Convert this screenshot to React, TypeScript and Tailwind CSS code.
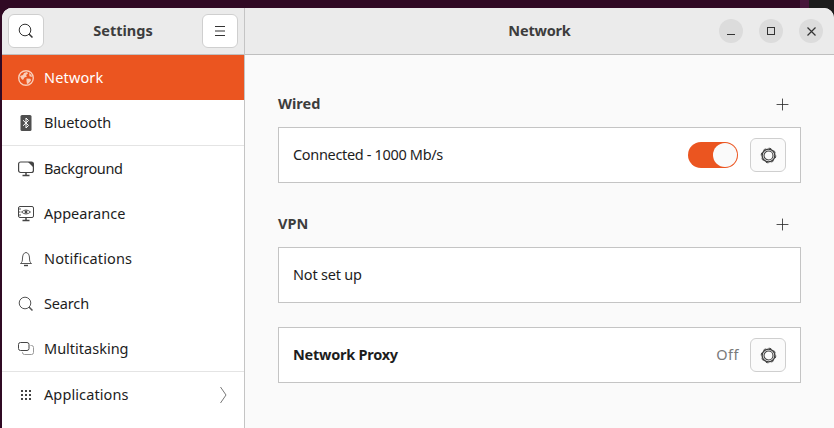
import { Plus } from "lucide-react";

function Gear() {
  return (
    <svg width="17" height="17" viewBox="0 0 17 17" fill="none" stroke="#3f3f3f">
      <circle cx="8.5" cy="8.5" r="4.5" strokeWidth="1.1" />
      <circle cx="8.5" cy="8.5" r="6.4" strokeWidth="1.4" />
      <circle cx="8.5" cy="8.5" r="7.3" strokeWidth="0.9" strokeDasharray="2.6 3.13" />
    </svg>
  );
}

function GlobeIcon() {
  return (
    <svg width="16" height="16" viewBox="0 0 16 16">
      <circle cx="8" cy="8" r="7.3" fill="#eb5520" stroke="#f9cdb8" strokeWidth="1.4" />
      <path d="M2 6l3-1 1-2 3-1 1 1.5-2 1.5 1 1.5-2.5 1L5 10l-1.5-1zM8.5 8.5l4 .3.5 1.7-2.5 3-1.5.5-.5-3zM11 3l2.5 2 .5 2-2.5-.8z" fill="#f9cdb8" />
    </svg>
  );
}

function BluetoothIcon() {
  return (
    <svg width="16" height="16" viewBox="0 0 16 16">
      <rect x="2.5" y="0" width="11" height="16" rx="1.5" fill="#4f4f4f" />
      <path d="M5 5.2 10.5 10.5 8 13V3l2.5 2.5L5 10.8" fill="none" stroke="#fff" strokeWidth="1" />
    </svg>
  );
}

function BackgroundIcon() {
  return (
    <svg width="16" height="16" viewBox="0 0 16 16" fill="none">
      <rect x="0.6" y="1" width="14.8" height="10.5" rx="2" stroke="#444" strokeWidth="1.2" />
      <path d="M10 1h3.5a2 2 0 0 1 2 2v3.5z" fill="#444" />
      <path d="M4.5 14.5h7M8 11.5v3" stroke="#444" strokeWidth="1.5" />
    </svg>
  );
}

function AppearanceIcon() {
  return (
    <svg width="16" height="16" viewBox="0 0 16 16" fill="none" stroke="#444">
      <rect x="0.5" y="0.5" width="15" height="11" rx="1.5" />
      <path d="M3.5 6q4.5-4 9 0q-4.5 4-9 0z" strokeWidth="0.9" />
      <circle cx="8" cy="6" r="1.4" fill="#444" stroke="none" />
      <path d="M1 3h2M1 6h1.5M1 9h2" strokeWidth="0.9" />
      <path d="M4.5 14.5h7M8 11.5v3" strokeWidth="1.5" />
    </svg>
  );
}

function BellIcon() {
  return (
    <svg width="16" height="16" viewBox="0 0 16 16" fill="none" stroke="#444">
      <path d="M2.5 12.5c1.5-1 2-2.5 2-5.5 0-3 1.5-5.5 3.5-5.5s3.5 2.5 3.5 5.5c0 3 .5 4.5 2 5.5z" strokeWidth="0.9" />
      <path d="M6 14.5h4" strokeWidth="1.4" />
    </svg>
  );
}

function SearchIcon({ color = "#555" }: { color?: string }) {
  return (
    <svg width="16" height="16" viewBox="0 0 16 16" fill="none" stroke={color}>
      <circle cx="7" cy="7" r="5.8" strokeWidth="1" />
      <path d="M11 11l3.5 3.5" strokeWidth="1.5" />
    </svg>
  );
}

function MultitaskIcon() {
  return (
    <svg width="16" height="16" viewBox="0 0 16 16" fill="none" stroke="#444">
      <rect x="0.5" y="1.5" width="10.5" height="8" rx="2" />
      <path d="M12.5 4.5h1a2 2 0 0 1 2 2v5a2 2 0 0 1-2 2h-7a2 2 0 0 1-2-2v-.5" stroke="#999" />
    </svg>
  );
}

function AppsIcon() {
  const dots = [3, 7, 11];
  return (
    <svg width="16" height="16" viewBox="0 0 16 16" fill="#444">
      {dots.map((y) => dots.map((x) => <rect key={`${x}-${y}`} x={x} y={y} width="2" height="2" />))}
    </svg>
  );
}

function NavRow({ icon, label, active, chevron, tracking }: { icon: React.ReactNode; label: string; active?: boolean; chevron?: boolean; tracking?: string }) {
  return (
    <div className={`h-[45px] flex items-center pl-4 pr-4 text-[14.5px] ${active ? "bg-[#eb5520] text-white" : "text-[#1d1d1d]"}`}>
      <div className="w-4 h-4 mr-[10px] flex items-center justify-center shrink-0">{icon}</div>
      <span className={`flex-1 ${tracking ?? ""}`}>{label}</span>
      {chevron && (
        <svg width="7" height="18" viewBox="0 0 7 18" fill="none" stroke="#777" strokeWidth="1" className="mr-px">
          <path d="M.5 1l5.5 8-5.5 8" />
        </svg>
      )}
    </div>
  );
}

function GearButton() {
  return (
    <button className="w-9 h-[34px] flex items-center justify-center bg-[#fbfbfb] border border-[#cfcfcf] rounded-[6px]">
      <Gear />
    </button>
  );
}

function WinButton({ children }: { children: React.ReactNode }) {
  return <div className="w-6 h-6 rounded-full bg-[#dcdcdc] flex items-center justify-center">{children}</div>;
}

export default function App() {
  return (
    <div className="relative w-[834px] h-[428px] overflow-hidden bg-[#300a24] pt-2 pl-[2px]" style={{ fontFamily: '"Noto Sans", sans-serif' }}>
      {/* bits of the desktop behind the window corner */}
      <div className="absolute top-0 right-0 h-8 w-[34px] flex">
        <div className="w-[9px] bg-[#45163a]" />
        <div className="flex-1 bg-[#1c1c1c]" />
      </div>
      <div className="relative h-[420px] rounded-t-[10px] overflow-hidden flex bg-[#fafafa]">
        <aside className="w-[243px] shrink-0 border-r border-[#c4c4c4] flex flex-col bg-white">
          <header className="h-[47px] shrink-0 bg-[#ebebeb] border-b border-[#bfbfbf] flex items-center justify-between px-[6px]">
            <button className="w-9 h-[34px] flex items-center justify-center bg-white border border-[#cfcfcf] rounded-[6px]">
              <SearchIcon color="#333" />
            </button>
            <span className="font-bold text-[14.5px] text-[#3d3d3d]">Settings</span>
            <button className="w-9 h-[34px] flex items-center justify-center bg-white border border-[#cfcfcf] rounded-[6px]">
              <svg width="10" height="10" viewBox="0 0 10 10" stroke="#333" strokeWidth="1">
                <path d="M0 .5h10M0 5h10M0 9.5h10" />
              </svg>
            </button>
          </header>
          <NavRow icon={<GlobeIcon />} label="Network" active tracking="tracking-[0.15px]" />
          <NavRow icon={<BluetoothIcon />} label="Bluetooth" />
          <div className="h-px bg-[#e4e4e4]" />
          <NavRow icon={<BackgroundIcon />} label="Background" tracking="tracking-[-0.4px]" />
          <NavRow icon={<AppearanceIcon />} label="Appearance" />
          <NavRow icon={<BellIcon />} label="Notifications" tracking="tracking-[0.15px]" />
          <NavRow icon={<SearchIcon />} label="Search" tracking="tracking-[-0.15px]" />
          <NavRow icon={<MultitaskIcon />} label="Multitasking" />
          <div className="h-px bg-[#e4e4e4]" />
          <NavRow icon={<AppsIcon />} label="Applications" chevron tracking="tracking-[0.1px]" />
        </aside>
        <div className="flex-1 flex flex-col min-w-0">
          <header className="h-[47px] shrink-0 bg-[#ebebeb] border-b border-[#bfbfbf] flex items-center justify-end relative pr-[11px] gap-4">
            <span className="absolute inset-x-0 text-center font-bold text-[14.5px] tracking-[-0.2px] text-[#3d3d3d]">Network</span>
            <WinButton>
              <svg width="8" height="8" viewBox="0 0 8 8" stroke="#333" strokeWidth="1"><path d="M0 7.5h8" /></svg>
            </WinButton>
            <WinButton>
              <svg width="8" height="8" viewBox="0 0 8 8" fill="none" stroke="#333" strokeWidth="1"><rect x=".5" y=".5" width="7" height="7" /></svg>
            </WinButton>
            <WinButton>
              <svg width="9" height="9" viewBox="0 0 9 9" stroke="#333" strokeWidth="1.2"><path d="M.5.5l8 8M8.5.5l-8 8" /></svg>
            </WinButton>
          </header>
          <main className="flex-1 pl-[33px] pr-[33px] pt-[35px] text-[14.5px] text-[#1d1d1d]">
            <div className="flex items-center justify-between h-[28px] mb-[9px]">
              <span className="font-bold text-[#3d3d3d]">Wired</span>
              <Plus size={19} strokeWidth={1} className="mr-[9px] text-[#222]" />
            </div>
            <div className="h-14 bg-white border border-[#c4c4c4] flex items-center pl-[14px] pr-[14px]">
              <span className="flex-1 tracking-[-0.33px]">Connected - 1000 Mb/s</span>
              <div className="w-[50px] h-[26px] rounded-full bg-[#eb5520] flex items-center justify-end pr-px mr-3">
                <div className="w-6 h-6 rounded-full bg-[#fafafa]" />
              </div>
              <GearButton />
            </div>
            <div className="flex items-center justify-between h-[28px] mt-[27px] mb-[9px]">
              <span className="font-bold text-[#3d3d3d]">VPN</span>
              <Plus size={19} strokeWidth={1} className="mr-[9px] text-[#222]" />
            </div>
            <div className="h-14 bg-white border border-[#c4c4c4] flex items-center pl-[14px]">
              <span className="tracking-[-0.2px]">Not set up</span>
            </div>
            <div className="h-14 mt-6 bg-white border border-[#c4c4c4] flex items-center pl-[14px] pr-[14px]">
              <span className="flex-1 font-bold tracking-[-0.25px]">Network Proxy</span>
              <span className="text-[#7a7a7a] mr-[11px] tracking-[0.5px]">Off</span>
              <GearButton />
            </div>
          </main>
        </div>
      </div>
    </div>
  );
}
